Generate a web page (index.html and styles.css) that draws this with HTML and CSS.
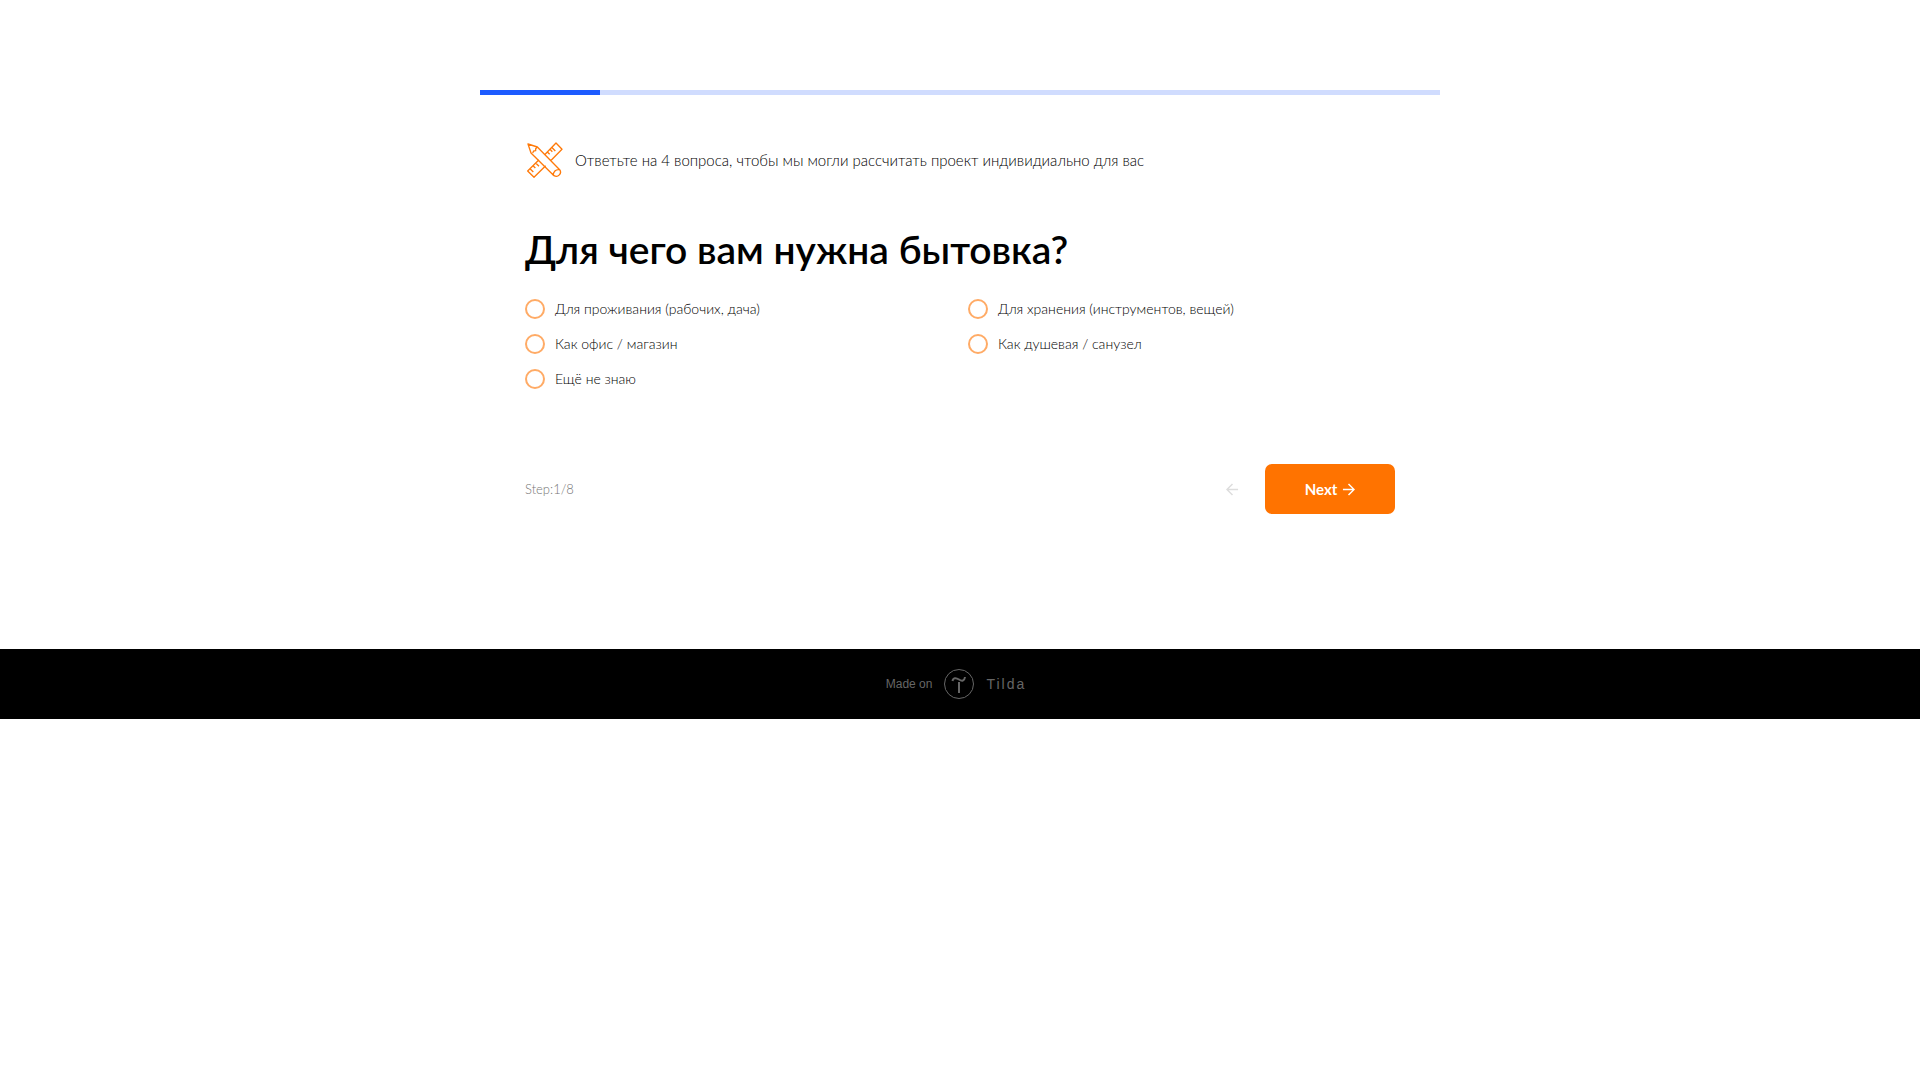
FILE: index.html
```html
<!DOCTYPE html>
<html lang="ru">
<head>
<meta charset="utf-8">
<meta name="viewport" content="width=device-width, initial-scale=1">
<title>Бытовки</title>
<link rel="stylesheet" href="styles.css">
</head>
<body>
<main class="quiz">
  <div class="progress"><div class="progress-bar" style="width: 12.5%"></div></div>
  <form class="quiz-form">
    <div class="intro">
      <svg class="intro-icon" viewBox="30 30 120 120" aria-hidden="true">
        <path d="M39 42 67 51 134 119C142 130 129 144 117 137L48 69ZM53 69 56 63 62 62 62 56 67 51M115 137C114 126 122 117 134 119M89 74 123 39 141 58 107 92M97 66 104 73M105 58 112 65M110 52 121 63M72 89 38 123 57 142 92 107M62 99 72 109M54 107 61 114M45 116 55 126"/>
      </svg>
      <p class="intro-text">Ответьте на 4 вопроса, чтобы мы могли рассчитать проект индивидиально для вас</p>
    </div>
    <fieldset class="question">
      <legend class="question-title">Для чего вам нужна бытовка?</legend>
      <div class="options">
        <label class="option"><input class="option-input" type="radio" name="purpose">Для проживания (рабочих, дача)</label>
        <label class="option"><input class="option-input" type="radio" name="purpose">Для хранения (инструментов, вещей)</label>
        <label class="option"><input class="option-input" type="radio" name="purpose">Как офис / магазин</label>
        <label class="option"><input class="option-input" type="radio" name="purpose">Как душевая / санузел</label>
        <label class="option"><input class="option-input" type="radio" name="purpose">Ещё не знаю</label>
      </div>
    </fieldset>
    <div class="controls">
      <span class="step">Step:1/8</span>
      <div class="buttons">
        <button class="prev" type="button" aria-label="Previous" disabled>
          <svg class="arrow" viewBox="0 0 14 14" aria-hidden="true"><path d="M13 7H1M7 1 1 7 7 13"/></svg>
        </button>
        <button class="next" type="button">Next
          <svg class="arrow" viewBox="0 0 14 14" aria-hidden="true"><path d="M1 7H13M7 1 13 7 7 13"/></svg>
        </button>
      </div>
    </div>
  </form>
</main>
<footer class="footer">
  <a class="made" href="#">
    <span class="made-on">Made on</span>
    <svg class="made-logo" viewBox="0 0 30 30" aria-hidden="true">
      <circle cx="15" cy="15" r="14.5"/>
      <path class="mark" d="M8.5 12C9 8.500 12 8.500 15 10.500S20.500 12 21 8M15 13V24"/>
    </svg>
    <span class="made-name">Tilda</span>
  </a>
</footer>
</body>
</html>
```
FILE: styles.css
```css
* { box-sizing: border-box; }

body {
  margin: 0;
  background: #fff;
  color: #000;
  font-family: Lato, "Open Sans", sans-serif;
  font-weight: 300;
}

.quiz {
  width: 100%;
  max-width: 960px;
  margin: 0 auto;
  padding: 90px 0;
}

.progress { height: 5px; background: #d0dcfe; }
.progress-bar { height: 100%; background: #1d5bff; }

.quiz-form { padding: 45px; }

.intro { display: flex; align-items: center; gap: 10px; }
.intro-icon {
  flex: none;
  width: 40px;
  height: 40px;
  fill: none;
  stroke: #ff7a0a;
  stroke-width: 4;
  stroke-linejoin: round;
}
.intro-text { margin: 0; font-size: 15px; line-height: 24px; }

.question { margin: 45px 0 0; padding: 0; border: 0; min-width: 0; }
.question-title {
  padding: 0;
  font-size: 39px;
  line-height: 48px;
  font-weight: 600;
}
.options {
  display: grid;
  grid-template-columns: 1fr 1fr;
  gap: 15px 16px;
  margin-top: 26px;
}
.option {
  display: flex;
  align-items: center;
  gap: 10px;
  font-size: 14px;
  line-height: 20px;
}
.option-input {
  appearance: none;
  flex: none;
  width: 20px;
  height: 20px;
  margin: 0;
  border: 2px solid #ffab66;
  border-radius: 50%;
}
.option-input:checked { background: #ff7300; box-shadow: inset 0 0 0 3px #fff; }

.controls {
  display: flex;
  align-items: center;
  justify-content: space-between;
  margin-top: 75px;
}
.step { color: #777; font-size: 13px; line-height: 20px; }
.buttons { display: flex; align-items: center; gap: 16px; }
button {
  display: flex;
  align-items: center;
  justify-content: center;
  gap: 5px;
  height: 50px;
  padding: 0;
  border: 0;
  background: none;
  font-family: inherit;
}
.arrow { width: 13px; height: 13px; fill: none; stroke: currentColor; stroke-width: 1.6; }
.prev { width: 34px; color: #ddd; }
.next {
  width: 130px;
  border-radius: 7px;
  background: #ff7300;
  color: #fff;
  font-size: 15px;
  font-weight: 700;
}

.footer {
  display: flex;
  align-items: center;
  justify-content: center;
  height: 70px;
  background: #000;
  font-family: "Liberation Sans", Arial, sans-serif;
  font-weight: 400;
}
.made {
  display: flex;
  align-items: center;
  gap: 12px;
  padding-right: 8px;
  color: #666;
  text-decoration: none;
}
.made-on { font-size: 12px; }
.made-logo { width: 30px; height: 30px; fill: none; stroke: #666; }
.mark { stroke-width: 2; }
.made-name { font-size: 14px; letter-spacing: 2px; }
```
